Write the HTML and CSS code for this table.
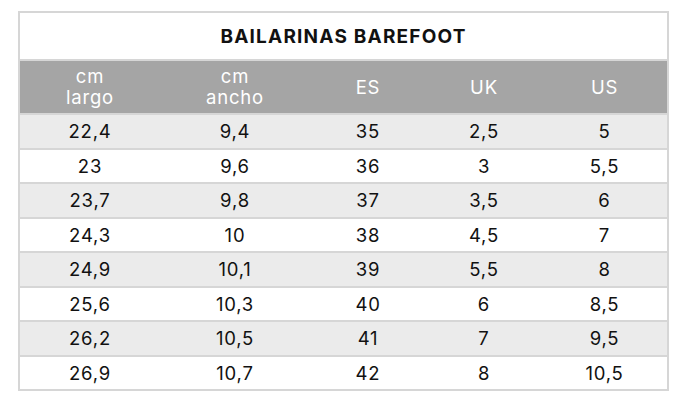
FILE: index.html
```html
<!DOCTYPE html>
<html lang="es">
<head>
<meta charset="utf-8">
<title>Bailarinas Barefoot</title>
<link rel="stylesheet" href="styles.css">
</head>
<body>
<div class="table">
  <div class="title">BAILARINAS BAREFOOT</div>
  <div class="row head">
    <div class="c c1">cm<br>largo</div>
    <div class="c c2">cm<br>ancho</div>
    <div class="c c3">ES</div>
    <div class="c c4">UK</div>
    <div class="c c5">US</div>
  </div>
  <div class="row alt"><div class="c c1">22,4</div><div class="c c2">9,4</div><div class="c c3">35</div><div class="c c4">2,5</div><div class="c c5">5</div></div>
  <div class="row"><div class="c c1">23</div><div class="c c2">9,6</div><div class="c c3">36</div><div class="c c4">3</div><div class="c c5">5,5</div></div>
  <div class="row alt"><div class="c c1">23,7</div><div class="c c2">9,8</div><div class="c c3">37</div><div class="c c4">3,5</div><div class="c c5">6</div></div>
  <div class="row"><div class="c c1">24,3</div><div class="c c2">10</div><div class="c c3">38</div><div class="c c4">4,5</div><div class="c c5">7</div></div>
  <div class="row alt"><div class="c c1">24,9</div><div class="c c2">10,1</div><div class="c c3">39</div><div class="c c4">5,5</div><div class="c c5">8</div></div>
  <div class="row"><div class="c c1">25,6</div><div class="c c2">10,3</div><div class="c c3">40</div><div class="c c4">6</div><div class="c c5">8,5</div></div>
  <div class="row alt"><div class="c c1">26,2</div><div class="c c2">10,5</div><div class="c c3">41</div><div class="c c4">7</div><div class="c c5">9,5</div></div>
  <div class="row"><div class="c c1">26,9</div><div class="c c2">10,7</div><div class="c c3">42</div><div class="c c4">8</div><div class="c c5">10,5</div></div>
</div>
</body>
</html>
```

FILE: styles.css
```css
html, body {
  margin: 0;
  padding: 0;
  background: #ffffff;
}
body {
  font-family: Inter, "Open Sans", sans-serif;
  color: #111111;
}
.table {
  margin: 11px 0 0 18px;
  width: 647px;
  border: 2px solid #d6d6d6;
  display: flex;
  flex-direction: column;
}
.title {
  height: 46px;
  display: flex;
  align-items: center;
  justify-content: center;
  font-size: 19px;
  font-weight: 700;
  letter-spacing: 1.2px;
  color: #111111;
}
.row {
  display: flex;
  height: 32.5px;
  border-top: 2px solid #d6d6d6;
  background: #ffffff;
}
.row.alt {
  background: #ebebeb;
}
.row.head {
  height: 52px;
  background: #a5a5a5;
  color: #ffffff;
  line-height: 21px;
}
.c {
  display: flex;
  align-items: center;
  justify-content: center;
  text-align: center;
  font-size: 18.5px;
  letter-spacing: 0.8px;
}
.c1 { width: 140px; }
.c2 { width: 150px; }
.c3 { width: 116px; }
.c4 { width: 116px; }
.c5 { width: 125px; }
```
